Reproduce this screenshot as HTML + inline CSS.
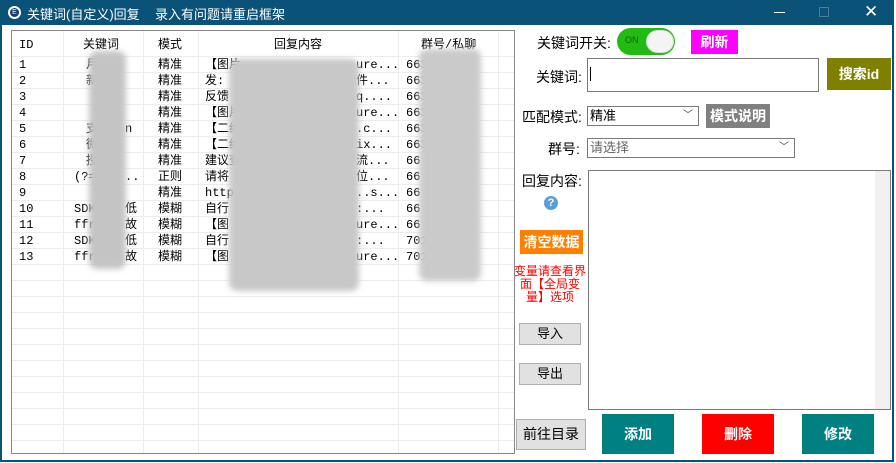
<!DOCTYPE html>
<html><head><meta charset="utf-8"><style>
*{margin:0;padding:0;box-sizing:border-box}
body{width:896px;height:463px;overflow:hidden;background:#fff;font-family:"Liberation Sans","Noto Sans CJK SC",sans-serif;font-size:13px;position:relative}
.a{position:absolute}
#win{left:0;top:0;width:894px;height:462px;border:2px solid #0b5279;border-top:none;background:#fff}
#tb{left:0;top:0;width:894px;height:25px;background:#0b5279;color:#fff}
#tbl{left:11px;top:30px;width:504px;height:424px;border:1px solid #888;overflow:hidden;font-family:"Liberation Mono","Noto Sans CJK SC",monospace;font-size:12px}
.hl{position:absolute;left:0;width:502px;height:1px;background:#ececec}
.vl{position:absolute;top:0;width:1px;height:424px;background:#ececec}
.c{position:absolute;white-space:nowrap;line-height:16px}
.btn{position:absolute;color:#fff;font-weight:bold;text-align:center;font-size:14px}
.gb{position:absolute;background:#e1e1e1;border:1px solid #adadad;text-align:center;font-size:13px}
.lbl{position:absolute;font-size:14px;white-space:nowrap}
.blur{position:absolute;background:#c4c4c4;filter:blur(3px);border-radius:8px}
</style></head><body>
<div id="win" class="a"></div>
<div id="tb" class="a">
 <div class="a" style="left:8px;top:6px;width:13px;height:13px;border-radius:50%;background:#fff"></div>
 <div class="a" style="left:10px;top:8px;width:9px;height:9px;border-radius:50%;background:#1a3a6e;color:#fff;font-size:7px;line-height:9px;text-align:center">E</div>
 <div class="a" style="left:27px;top:4px;font-size:13px">关键词(自定义)回复</div>
 <div class="a" style="left:155px;top:4px;font-size:13px">录入有问题请重启框架</div>
 <div class="a" style="left:774px;top:12px;width:11px;height:1px;background:#fff"></div>
 <div class="a" style="left:819px;top:7px;width:10px;height:10px;border:1px solid #4f7a96"></div>
 <div class="a" style="left:864px;top:2px;font-size:17px;line-height:20px">✕</div>
</div>
<div id="tbl" class="a">
 <div class="vl" style="left:51px"></div><div class="vl" style="left:131px"></div><div class="vl" style="left:186px"></div><div class="vl" style="left:386px"></div><div class="vl" style="left:486px"></div>
 <div class="hl" style="top:25px"></div>
 <div id="rows"></div>
 <div class="c" style="left:7px;top:6px">ID</div>
 <div class="c" style="left:71px;top:6px">关键词</div>
 <div class="c" style="left:146px;top:6px">模式</div>
 <div class="c" style="left:262px;top:6px">回复内容</div>
 <div class="c" style="left:409px;top:6px">群号/私聊</div>
 <div class="blur" style="left:77px;top:20px;width:37px;height:218px"></div>
 <div class="blur" style="left:217px;top:28px;width:130px;height:232px;background:#c8c8c8"></div>
 <div class="blur" style="left:407px;top:18px;width:62px;height:232px;background:#cacaca"></div>
</div>
<script>
var d=[["1","精准","【图片","ure...","663"],["2","精准","发:","件...","663"],["3","精准","反馈","q....","663"],["4","精准","【图片","ure...","663"],["5","精准","【二维",".c...","663"],["6","精准","【二维","ix...","663"],["7","精准","建议查","流...","66"],["8","正则","请将","位...","66"],["9","精准","https","..s...","66"],["10","模糊","自行",":...","66"],["11","模糊","【图","ure...","66"],["12","模糊","自行",":...","701"],["13","模糊","【图","ure...","701"]];
var kw=["月","新","","","支","微","授","(?=","","SDK","ffr","SDK","ffr"];
var kr=["","","","","n","","","..","","低","故","低","故"];
var h="";
for(var i=0;i<26;i++){h+='<div class="hl" style="top:'+(41+i*16)+'px"></div>';}
d.forEach(function(r,i){var t=26+i*16;
h+='<div class="c" style="left:7px;top:'+t+'px">'+r[0]+'</div>';
h+='<div class="c" style="left:'+(kw[i].length>2?62:74)+'px;top:'+t+'px">'+kw[i]+'</div>';
h+='<div class="c" style="left:113px;top:'+t+'px">'+kr[i]+'</div>';
h+='<div class="c" style="left:146px;top:'+t+'px">'+r[1]+'</div>';
h+='<div class="c" style="left:193px;top:'+t+'px">'+r[2]+'</div>';
h+='<div class="c" style="left:344px;top:'+t+'px">'+r[3]+'</div>';
h+='<div class="c" style="left:394px;top:'+t+'px">'+r[4]+'</div>';});
document.getElementById('rows').innerHTML=h;
</script>
<div class="lbl" style="left:537px;top:33px">关键词开关:</div>
<div class="a" style="left:617px;top:28px;width:58px;height:27px;border-radius:14px;background:#22bb11"></div>
<div class="a" style="left:625px;top:35px;font-size:9px;color:#116600">ON</div>
<div class="a" style="left:646px;top:30px;width:28px;height:23px;border-radius:12px;background:#f4f4f4;border:1px solid #ddd"></div>
<div class="btn" style="left:691px;top:30px;width:47px;height:24px;background:#ff00ff;line-height:24px">刷新</div>
<div class="lbl" style="left:536px;top:67px">关键词:</div>
<div class="a" style="left:587px;top:58px;width:232px;height:34px;border:1px solid #7a7a7a"></div>
<div class="a" style="left:590px;top:67px;width:1px;height:14px;background:#000"></div>
<div class="btn" style="left:827px;top:58px;width:64px;height:32px;background:#808000;line-height:32px">搜索id</div>
<div class="lbl" style="left:522px;top:107px">匹配模式:</div>
<div class="a" style="left:587px;top:106px;width:112px;height:20px;border:1px solid #7a7a7a;font-size:13px;padding-left:2px;line-height:18px">精准<span style="position:absolute;right:5px;top:0;font-size:10px;color:#444">﹀</span></div>
<div class="btn" style="left:706px;top:104px;width:64px;height:24px;background:#808080;line-height:24px">模式说明</div>
<div class="lbl" style="left:548px;top:139px">群号:</div>
<div class="a" style="left:587px;top:138px;width:208px;height:20px;border:1px solid #7a7a7a;font-size:13px;padding-left:2px;line-height:18px;color:#666">请选择<span style="position:absolute;right:5px;top:0;font-size:10px;color:#444">﹀</span></div>
<div class="lbl" style="left:522px;top:171px">回复内容:</div>
<div class="a" style="left:544px;top:196px;width:14px;height:14px;border-radius:50%;background:#5a9fd8;color:#fff;font-size:11px;font-weight:bold;text-align:center;line-height:14px">?</div>
<div class="a" style="left:588px;top:170px;width:303px;height:240px;border:1px solid #7a7a7a"></div>
<div class="a" style="left:875px;top:171px;width:15px;height:238px;background:#f0f0f0"></div>
<div class="btn" style="left:520px;top:230px;width:63px;height:24px;background:#ff8000;line-height:24px">清空数据</div>
<div class="a" style="left:512px;top:265px;width:76px;text-align:center;color:#f00;font-size:12px;line-height:13px">变量请查看界面【全局变量】选项</div>
<div class="gb" style="left:519px;top:323px;width:62px;height:22px;line-height:20px">导入</div>
<div class="gb" style="left:519px;top:363px;width:62px;height:22px;line-height:20px">导出</div>
<div class="gb" style="left:516px;top:419px;width:70px;height:31px;line-height:29px;font-size:14px">前往目录</div>
<div class="btn" style="left:602px;top:414px;width:72px;height:40px;background:#008080;line-height:40px">添加</div>
<div class="btn" style="left:702px;top:414px;width:72px;height:40px;background:#ff0000;line-height:40px">删除</div>
<div class="btn" style="left:802px;top:414px;width:72px;height:40px;background:#008080;line-height:40px">修改</div>
</body></html>
